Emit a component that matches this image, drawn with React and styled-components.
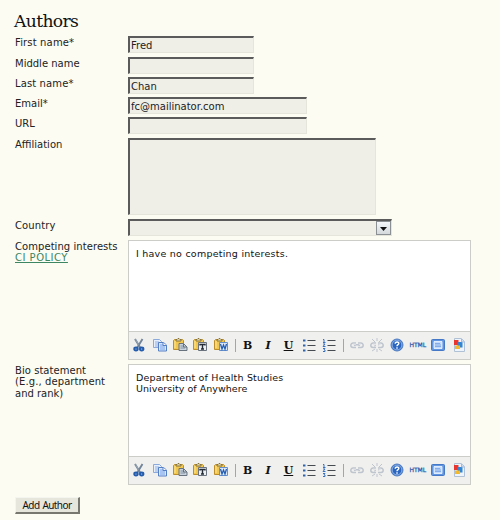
import React from "react";
import styled, { createGlobalStyle } from "styled-components";

const GlobalStyle = createGlobalStyle`
  body { margin: 0; background: #fcfcf3; }
  * { box-sizing: border-box; }
`;

const Page = styled.main`
  width: 500px;
  height: 520px;
  padding: 10px 0 0 15px;
  overflow: hidden;
  background: #fcfcf3;
  color: #222;
  font: 10px/12px "DejaVu Sans", Verdana, sans-serif;
`;

const Heading = styled.h1`
  margin: 0 0 0 -1px;
  height: 26px;
  font: 400 17.2px/22px Georgia, "DejaVu Serif", serif;
  letter-spacing: -0.65px;
  color: #111;
`;

const Row = styled.div`
  display: grid;
  grid-template-columns: 113px 1fr;
  align-items: start;
  height: ${(p) => p.$height}px;
`;

const Label = styled.label`
  padding-top: 1px;
  white-space: nowrap;
`;

const Line = styled.span`
  display: block;
  width: max-content;
  height: ${(p) => p.$height || 11.4}px;
  letter-spacing: ${(p) => p.$spacing || 0}px;
`;

const PolicyLink = styled.a`
  display: block;
  width: max-content;
  height: 12px;
  line-height: 11px;
  color: #3d8663;
  text-decoration: underline;
  letter-spacing: 0.5px;
`;

const sunken = `
  border: 1px solid #e5e5dc;
  border-top: 2px solid #5b5b5b;
  border-left: 2px solid #5b5b5b;
  border-radius: 0;
  background: #efefe8;
  outline: none;
`;

const Input = styled.input`
  ${sunken}
  display: block;
  width: ${(p) => p.$width}px;
  height: 17px;
  margin: 0;
  padding: 1px 0 0 1px;
  color: #222;
  font: 10px/13px "DejaVu Sans", Verdana, sans-serif;
`;

const TextArea = styled.textarea`
  ${sunken}
  display: block;
  width: 248px;
  height: 77px;
  margin: 0;
  resize: none;
`;

const Select = styled.div`
  ${sunken}
  display: flex;
  justify-content: flex-end;
  width: 264px;
  height: 17px;
`;

const Arrow = styled.span`
  display: flex;
  align-items: center;
  justify-content: center;
  width: 15px;
  height: 14px;
  padding-top: 2px;
  border: 1px solid #8b9095;
  background: linear-gradient(#f4f6f8, #d5d9dc);
`;

const Editor = styled.section`
  width: 343px;
  border: 1px solid #ccccc9;
  background: #fff;
`;

const Content = styled.div`
  height: ${(p) => p.$height}px;
  padding: 7px 7px;
  color: #111;
  font-size: 9.5px;
  line-height: 11px;
`;

const Toolbar = styled.div`
  display: grid;
  grid-template-columns: repeat(5, 20.4px) 6.5px repeat(5, 20.4px) 7px repeat(6, 20.4px);
  align-items: center;
  height: 28px;
  border-top: 1px solid #ccccc9;
  background: #f0f0ee;
`;

const Tool = styled.span`
  display: flex;
  align-items: center;
  justify-content: center;
  height: 27px;
  padding-bottom: 1px;
`;

const Separator = styled.span`
  justify-self: center;
  width: 1px;
  height: 13px;
  margin-left: 2px;
  background: #a4a4a9;
`;

const Letter = styled.span`
  color: #111;
  font: ${(p) => (p.$italic ? "italic " : "")}700 11px/13px "DejaVu Serif", serif;
  text-decoration: ${(p) => (p.$underline ? "underline" : "none")};
  text-underline-offset: 1px;
`;

const HtmlLabel = styled.span`
  color: #2858ac;
  font: 400 6px/8px "DejaVu Sans", sans-serif;
  -webkit-text-stroke: 0.25px #2858ac;
`;

const Button = styled.button`
  display: block;
  width: 65px;
  height: 17px;
  margin: 12px 0 0;
  padding: 0;
  border: 1px solid #f5f5f0;
  border-right: 2px solid #77776f;
  border-bottom: 2px solid #77776f;
  border-radius: 0;
  background: #e6e6dd;
  color: #111;
  font: 10px/13px "Noto Sans", Tahoma, sans-serif;
  letter-spacing: -0.6px;
  word-spacing: 1px;
  white-space: nowrap;
`;

const Icon = ({ children }) => (
  <svg width="16" height="16" viewBox="0 0 16 16" fill="none" aria-hidden="true">
    {children}
  </svg>
);

const Cut = () => (
  <Icon>
    <path d="M4 2l5.5 9M11.5 2L6 11" stroke="#71849a" strokeWidth="1.9" />
    <path d="M4.5 2.5l3 5" stroke="#aab5c2" strokeWidth="0.7" />
    <ellipse cx="5" cy="12" rx="1.7" ry="1.4" stroke="#245cad" strokeWidth="2" />
    <ellipse cx="10.7" cy="12" rx="1.7" ry="1.4" stroke="#245cad" strokeWidth="2" />
  </Icon>
);

const Copy = () => (
  <Icon>
    <path d="M1.5 2.5h6l2 2v6h-8z" fill="#e7effc" stroke="#8ba9db" />
    <path d="M3 5h4M3 7h4M3 9h3" stroke="#8fafe2" />
    <path d="M6.5 5.5h5l3 2.5v6h-8z" fill="#d7e6ff" stroke="#547fc4" />
    <path d="M8 8h3M8 10h5M8 12h5" stroke="#79a2e4" />
    <path d="M11 5.5v3h3.5" stroke="#547fc4" fill="#f8fbff" />
  </Icon>
);

const Clipboard = ({ kind }) => (
  <Icon>
    <path d="M1.5 3.5l1-1h8l1 1v9h-10z" fill="#f0c64f" stroke="#bd8d28" />
    <path d="M3 4v7" stroke="#ffe69a" />
    <path d="M4 4h5V2.5H8l-1-1H6l-1 1H4z" fill="#e1d9ad" stroke="#86733c" />
    {!kind && (
      <>
        <path d="M7 6.5h4.5L15 10v3.5H7z" fill="#c8d3df" stroke="#67727e" />
        <path d="M8.5 9H11M8.5 11H13" stroke="#83909f" />
        <path d="M11.5 7v3H15" stroke="#67727e" />
      </>
    )}
    {kind === "text" && (
      <>
        <path d="M6.5 5.5h8v8h-8z" fill="#edf0f2" stroke="#69727d" />
        <path d="M8 8.5V7.5h5v1M10.5 7.5v4M9 12h3" stroke="#222b36" strokeWidth="1.4" />
      </>
    )}
    {kind === "word" && (
      <>
        <path d="M6.5 5.5h8v8h-8z" fill="#dce9fc" stroke="#668fcd" />
        <path d="M7.5 7l1.5 5 1.5-4 1.5 4 1.5-5" stroke="#255db0" strokeWidth="1.3" />
      </>
    )}
  </Icon>
);

const BulletList = () => (
  <Icon>
    <path d="M6.5 3.5h8M6.5 8.5h8M6.5 13.5h8" stroke="#454b50" />
    <path d="M2 2.500h2.500v2H2zM2 7.500h2.500v2H2zM2 12.500h2.500v2H2z" fill="#2e63b0" />
  </Icon>
);

const NumberList = () => (
  <Icon>
    <path d="M6.500 3.500h8M6.500 8.500h8M6.500 13.500h8" stroke="#454b50" />
    <path d="M2 2.500h1v3M2 5.500h2.500M2 7h2L2 9.500h2.500M2 11.500h2l-1 1 1 .5v1.500H2" stroke="#3570c3" />
  </Icon>
);

const Chain = ({ broken }) => (
  <Icon>
    <g stroke="#bfc5ce" strokeWidth="1.500">
      <path d="M7 10.500H4a2.200 2.200 0 010-4.400h3M9 6.100h3a2.200 2.200 0 010 4.400H9" />
      {!broken && <path d="M5 8.500l2-.8h2l2 .8" />}
      {broken && <path d="M7 8.500l-2 .6M9 8l2-.6M3 2l3 3M8 1v3M13 2l-3 3M3 14l3-2M8 15v-3M13 14l-3-2" strokeWidth="1" />}
    </g>
    <path d="M4 7.300h3M10 7.300h2" stroke="#e0e4ea" />
  </Icon>
);

const Help = () => (
  <Icon>
    <circle cx="8" cy="8" r="6" fill="#2a66bf" stroke="#4f7dc2" />
    <circle cx="8" cy="8" r="4.900" stroke="#a9c7f3" strokeWidth="0.800" />
    <path d="M6.200 6.800c0-2.600 3.900-2.300 3.600-.2C9.600 7.700 8 7.600 8 9.200" stroke="#fff" strokeWidth="1.400" />
    <path d="M7.300 10.300h1.400v1.400H7.300z" fill="#fff" />
  </Icon>
);

const FullScreen = () => (
  <Icon>
    <rect x="1.500" y="2.500" width="13" height="11" rx="1" fill="#6295df" stroke="#4579c8" />
    <path d="M4 4.500h8v7H4z" fill="#c2dbff" stroke="#f1f7ff" strokeWidth="0.800" />
    <path d="M5 6.500h5M5 8h6M5 9.500h6" stroke="#75a0df" strokeWidth="0.800" />
  </Icon>
);

const ImageFile = () => (
  <Icon>
    <path d="M3.500 1.500h7l3 3v10h-10z" fill="#edf4fc" stroke="#b1c1d5" />
    <path d="M3 3h4.500v5H3z" fill="#e8352e" />
    <path d="M6.500 5h5v5.500h-5z" fill="#3185d2" />
    <path d="M4 8.500h5V12H4z" fill="#f3b92f" />
    <path d="M10.500 2v3h3" fill="#cbdcf1" stroke="#a2b9d8" />
  </Icon>
);

function EditorToolbar() {
  return (
    <Toolbar role="toolbar">
      <Tool><Cut /></Tool>
      <Tool><Copy /></Tool>
      <Tool><Clipboard /></Tool>
      <Tool><Clipboard kind="text" /></Tool>
      <Tool><Clipboard kind="word" /></Tool>
      <Separator />
      <Tool><Letter>B</Letter></Tool>
      <Tool><Letter $italic>I</Letter></Tool>
      <Tool><Letter $underline>U</Letter></Tool>
      <Tool><BulletList /></Tool>
      <Tool><NumberList /></Tool>
      <Separator />
      <Tool><Chain /></Tool>
      <Tool><Chain broken /></Tool>
      <Tool><Help /></Tool>
      <Tool><HtmlLabel>HTML</HtmlLabel></Tool>
      <Tool><FullScreen /></Tool>
      <Tool><ImageFile /></Tool>
    </Toolbar>
  );
}

export default function App() {
  return (
    <>
      <GlobalStyle />
      <Page>
        <Heading>Authors</Heading>
        <Row $height={21}><Label><Line $spacing={0.15}>First name*</Line></Label><Input $width={126} defaultValue="Fred" /></Row>
        <Row $height={20}><Label><Line>Middle name</Line></Label><Input $width={126} /></Row>
        <Row $height={20}><Label><Line $spacing={0.12}>Last name*</Line></Label><Input $width={126} defaultValue="Chan" /></Row>
        <Row $height={20}><Label><Line>Email*</Line></Label><Input $width={179} defaultValue="fc@mailinator.com" /></Row>
        <Row $height={21}><Label><Line>URL</Line></Label><Input $width={179} /></Row>
        <Row $height={81}><Label><Line>Affiliation</Line></Label><TextArea /></Row>
        <Row $height={21}>
          <Label><Line $spacing={0.1}>Country</Line></Label>
          <Select role="combobox" aria-label="Country">
            <Arrow><svg width="7" height="4" viewBox="0 0 7 4"><path d="M0 0h7L3.500 4z" fill="#111" /></svg></Arrow>
          </Select>
        </Row>
        <Row $height={124}>
          <Label><Line $spacing={0.06}>Competing interests</Line><PolicyLink href="#">CI POLICY</PolicyLink></Label>
          <Editor>
            <Content $height={90}><Line $spacing={0.24}>I have no competing interests.</Line></Content>
            <EditorToolbar />
          </Editor>
        </Row>
        <Row $height={121}>
          <Label><Line $spacing={0.05}>Bio statement</Line><Line $spacing={0.1}>(E.g., department</Line><Line>and rank)</Line></Label>
          <Editor>
            <Content $height={91}>
              <Line $spacing={0.19} $height={10.5}>Department of Health Studies</Line>
              <Line $spacing={0.04} $height={11}>University of Anywhere</Line>
            </Content>
            <EditorToolbar />
          </Editor>
        </Row>
        <Button type="button">Add Author</Button>
      </Page>
    </>
  );
}
